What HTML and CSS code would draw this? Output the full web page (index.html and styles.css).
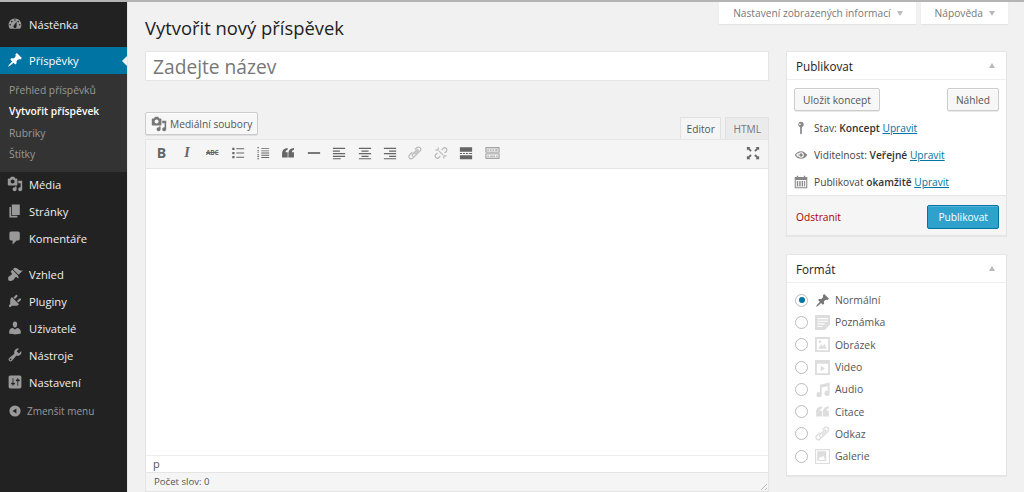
FILE: index.html
```html
<!DOCTYPE html>
<html lang="cs">
<head>
<meta charset="utf-8">
<title>Vytvořit nový příspěvek</title>
<link rel="stylesheet" href="styles.css">
</head>
<body>
<svg class="defs" width="0" height="0" aria-hidden="true">
  <symbol id="i-dash" viewBox="0 0 20 20"><path d="M3.76 16h12.48c1.1-1.37 1.76-3.11 1.76-5 0-4.42-3.58-8-8-8s-8 3.58-8 8c0 1.89.66 3.63 1.76 5zM10 4c.55 0 1 .45 1 1s-.45 1-1 1-1-.45-1-1 .45-1 1-1zM6 6c.55 0 1 .45 1 1s-.45 1-1 1-1-.45-1-1 .45-1 1-1zm8 0c.55 0 1 .45 1 1s-.45 1-1 1-1-.45-1-1 .45-1 1-1zm-5.37 5.55L12 7v6c0 1.1-.9 2-2 2s-2-.9-2-2c0-.57.24-1.08.63-1.45zM4 10c.55 0 1 .45 1 1s-.45 1-1 1-1-.45-1-1 .45-1 1-1zm12 0c.55 0 1 .45 1 1s-.45 1-1 1-1-.45-1-1 .45-1 1-1z" fill-rule="evenodd"/></symbol>
  <symbol id="i-pin" viewBox="0 0 20 20"><path d="M10.44 3.02l1.82-1.82 6.36 6.35-1.83 1.82c-1.05-.68-2.48-.57-3.41.36l-.75.75c-.92.93-1.04 2.35-.35 3.41l-1.83 1.82-2.41-2.41-2.8 2.79c-.42.42-3.38 2.71-3.8 2.29s1.86-3.39 2.28-3.81l2.79-2.79L4.1 9.36l1.83-1.82c1.05.69 2.48.57 3.4-.36l.75-.75c.93-.92 1.05-2.35.36-3.41z"/></symbol>
  <symbol id="i-media" viewBox="0 0 20 20"><path fill-rule="evenodd" d="M13 11V4c0-.55-.45-1-1-1h-1.67L9 1H5L3.67 3H2c-.55 0-1 .45-1 1v7c0 .55.45 1 1 1h10c.55 0 1-.45 1-1zM7 4.500c1.380 0 2.500 1.120 2.500 2.500S8.380 9.500 7 9.500 4.500 8.380 4.500 7 5.620 4.500 7 4.500zM14 6h5v10.500c0 1.380-1.120 2.500-2.500 2.500S14 17.880 14 16.500s1.120-2.500 2.500-2.500c.17 0 .34.02.5.05V9h-3V6zm-4 8.050V13h2v3.500c0 1.380-1.120 2.500-2.500 2.500S7 17.880 7 16.500 8.120 14 9.500 14c.17 0 .34.02.5.05z"/></symbol>
  <symbol id="i-link" viewBox="0 0 20 20"><path fill="none" stroke="currentColor" stroke-width="1.800" d="M10 5l2.500-2.500a3.200 3.200 0 0 1 4.800 4.500l-7.500 7.500a2.100 2.100 0 0 1-3-3l6-6a1 1 0 0 1 1.500 1.500l-5 5M8.500 15.500L6.500 17.500A3.200 3.200 0 0 1 2.500 12.500L6 9"/></symbol>
  <symbol id="i-quote" viewBox="0 0 20 20"><path d="M9.500 3v2.500C7.300 6.200 6.500 7.500 6.500 9H9.500V16.500H1.500V10.500C1.500 6 4.500 3.500 9.500 3zM18.500 3v2.500C16.300 6.200 15.500 7.500 15.500 9H18.500V16.500H10.500V10.500C10.500 6 13.500 3.500 18.500 3z"/></symbol>
</svg>
<div class="app">
  <nav class="sidebar">
    <div class="menu-group">
      <a class="menu-item"><svg class="mi"><use href="#i-dash"/></svg>Nástěnka</a>
    </div>
    <div class="menu-group">
      <a class="menu-item current"><svg class="mi"><use href="#i-pin"/></svg>Příspěvky</a>
      <ul class="submenu">
        <li>Přehled příspěvků</li>
        <li class="on">Vytvořit příspěvek</li>
        <li>Rubriky</li>
        <li>Štítky</li>
      </ul>
      <a class="menu-item"><svg class="mi"><use href="#i-media"/></svg>Média</a>
      <a class="menu-item"><svg class="mi" viewBox="0 0 20 20"><path d="M6 15V2h10v13H6zm-1 1h8v2H3V5h2v11z"/></svg>Stránky</a>
      <a class="menu-item"><svg class="mi" viewBox="0 0 20 20"><path d="M5 2h9c1.100 0 2 .9 2 2v7c0 1.100-.9 2-2 2h-2l-5 5v-5H5c-1.100 0-2-.9-2-2V4c0-1.100.9-2 2-2z"/></svg>Komentáře</a>
    </div>
    <div class="menu-group">
      <a class="menu-item"><svg class="mi" viewBox="0 0 20 20"><path d="M14.480 11.060L7.410 3.990l1.500-1.500c.5-.56 2.300-.47 3.510.32 1.210.8 1.430 1.280 2.910 2.100 1.180.64 2.450 1.260 4.450.85zm-.71.71L6.700 4.700 4.930 6.470c-.39.39-.39 1.020 0 1.410l1.060 1.060c.39.39.39 1.030 0 1.420-.6.6-1.430 1.110-2.210 1.690-.35.26-.7.530-1.010.84C1.430 13.230.78 15.600 2 18.010c2.410 1.220 4.780.57 6.130-.78.31-.31.58-.66.84-1.010.58-.78 1.090-1.610 1.690-2.210.39-.39 1.030-.39 1.420 0l1.060 1.060c.39.39 1.020.39 1.410 0z"/></svg>Vzhled</a>
      <a class="menu-item"><svg class="mi" viewBox="0 0 20 20"><path d="M13.110 4.360L9.870 7.600 8 5.730l3.240-3.240c.35-.34 1.050-.2 1.560.32.52.51.66 1.210.31 1.550zm-8 1.770l.91-1.120 9.010 9.010-1.190.84c-.71.71-2.630 1.160-3.820 1.160H6.140L4.900 17.260c-.59.59-1.540.59-2.120 0-.59-.58-.59-1.530 0-2.120l1.240-1.240v-3.880c0-1.130.4-3.190 1.090-3.890zm7.260 3.970l3.240-3.240c.34-.35 1.040-.21 1.550.31.52.51.66 1.210.31 1.550l-3.240 3.250z"/></svg>Pluginy</a>
      <a class="menu-item"><svg class="mi" viewBox="0 0 20 20"><path d="M10 9.250c-2.270 0-2.730-3.440-2.730-3.440C7 4.020 7.820 2 9.970 2c2.160 0 2.980 2.020 2.710 3.810 0 0-.41 3.440-2.680 3.440zm0 2.570L12.720 10c2.390 0 4.520 2.330 4.520 4.530v2.490s-3.650 1.130-7.240 1.130c-3.650 0-7.240-1.130-7.240-1.130v-2.490c0-2.250 1.940-4.480 4.470-4.480z"/></svg>Uživatelé</a>
      <a class="menu-item"><svg class="mi" viewBox="0 0 20 20"><path fill-rule="evenodd" d="M16.680 9.770c-1.340 1.340-3.300 1.670-4.950.99l-5.410 6.520c-.99.99-2.590.99-3.580 0s-.99-2.590 0-3.570l6.520-5.420c-.68-1.650-.35-3.610.99-4.950 1.280-1.280 3.120-1.620 4.720-1.060l-2.890 2.890 2.820 2.820 2.860-2.870c.53 1.580.18 3.390-1.080 4.650zM3.810 16.210c.4.39 1.040.39 1.430 0 .4-.4.4-1.040 0-1.430-.39-.4-1.030-.4-1.430 0-.39.39-.39 1.030 0 1.430z"/></svg>Nástroje</a>
      <a class="menu-item"><svg class="mi" viewBox="0 0 20 20"><path fill-rule="evenodd" d="M18 16V4c0-1.100-.9-2-2-2H4c-1.100 0-2 .9-2 2v12c0 1.100.9 2 2 2h12c1.100 0 2-.9 2-2zM8 11h1c.55 0 1 .45 1 1s-.45 1-1 1H8v1.500c0 .28-.22.5-.5.5s-.5-.22-.5-.5V13H6c-.55 0-1-.45-1-1s.45-1 1-1h1V5.500c0-.28.22-.5.5-.5s.5.22.5.5V11zm5-2h-1c-.55 0-1-.45-1-1s.45-1 1-1h1V5.500c0-.28.22-.5.5-.5s.5.22.5.5V7h1c.55 0 1 .45 1 1s-.45 1-1 1h-1v5.500c0 .28-.22.5-.5.5s-.5-.22-.5-.5V9z"/></svg>Nastavení</a>
      <a class="collapse"><svg class="ci" viewBox="0 0 20 20"><path fill-rule="evenodd" d="M10 2a8 8 0 1 0 0 16 8 8 0 0 0 0-16zm2 4.500v7L6.500 10z"/></svg>Zmenšit menu</a>
    </div>
  </nav>

  <main class="content">
    <header class="top">
      <h1>Vytvořit nový příspěvek</h1>
      <div class="screen-tabs">
        <button class="screen-tab">Nastavení zobrazených informací<i class="caret"></i></button>
        <button class="screen-tab">Nápověda<i class="caret"></i></button>
      </div>
    </header>
    <div class="columns">
      <section class="primary">
        <div class="title-field">Zadejte název</div>
        <div class="editor-top">
          <button class="media-btn"><svg class="bi"><use href="#i-media"/></svg>Mediální soubory</button>
          <div class="editor-tabs">
            <span class="etab active">Editor</span>
            <span class="etab">HTML</span>
          </div>
        </div>
        <div class="editor">
          <div class="toolbar">
            <span class="tb tb-b">B</span>
            <span class="tb tb-i">I</span>
            <span class="tb tb-s">ABC</span>
            <svg class="tb" viewBox="0 0 16 16"><path d="M1.500 2h2.500v2.500H1.500zM6 2.500h9v1.200H6zM1.500 6.800h2.500v2.500H1.500zM6 7.400h9v1.200H6zM1.500 11.500h2.500v2.500H1.500zM6 12.200h9v1.200H6z"/></svg>
            <svg class="tb" viewBox="0 0 16 16"><path d="M1.500 1.500h2v1h-2zM1.500 4.500h2v1h-2zM1.500 6.500h2v1h-2zM1.500 9.500h2v1h-2zM1.500 11.500h2v1h-2zM1.500 14h2v1h-2zM6 2.200h9v1H6zM6 5h9v1H6zM6 7.500h9v1H6zM6 10h9v1H6zM6 12.700h9v1H6z"/></svg>
            <svg class="tb"><use href="#i-quote"/></svg>
            <svg class="tb" viewBox="0 0 16 16"><path d="M1 7h14v2H1z"/></svg>
            <svg class="tb" viewBox="0 0 16 16"><path d="M1 2h14v1.500H1zM1 5h8v1.500H1zM1 8h14v1.500H1zM1 11h14v1.500H1zM1 14h9v1H1z"/></svg>
            <svg class="tb" viewBox="0 0 16 16"><path d="M1 2h14v1.500H1zM4 5h8v1.500H4zM1 8h14v1.500H1zM4 11h8v1.500H4zM1 14h14v1H1z"/></svg>
            <svg class="tb" viewBox="0 0 16 16"><path d="M1 2h14v1.500H1zM7 5h8v1.500H7zM1 8h14v1.500H1zM7 11h8v1.500H7zM1 14h14v1H1z"/></svg>
            <svg class="tb light"><use href="#i-link"/></svg>
            <svg class="tb light" viewBox="0 0 20 20"><path fill="none" stroke="currentColor" stroke-width="1.800" d="M11 6l2.500-3a3.200 3.200 0 0 1 4.300 4.500L15 10M9 14l-2.500 3a3.200 3.200 0 0 1-4.300-4.500L5 10M7 7l6 6M6 2v4M2 6h4M14 18v-4M18 14h-4"/></svg>
            <svg class="tb" viewBox="0 0 16 16"><path d="M1 1.500h14v5H1zM1 8h2.500v1H1zM4.500 8H7v1H4.500zM8 8h2.500v1H8zM11.500 8H15v1h-3.500zM1 10.500h14v4.500H1z"/></svg>
            <svg class="tb kitchen" viewBox="0 0 16 16"><path fill-rule="evenodd" d="M0 1.500h16v6H0zM1 2.500v4h14v-4zM2 4h2v1H2zM5 4h2v1H5zM8 4h2v1H8zM11 4h3v1h-3zM0 8.500h16v6H0zM1 9.500v4h14v-4zM2 11h2v1H2zM5 11h6v1H5zM12 11h2v1h-2z"/></svg>
            <svg class="tb fs" viewBox="0 0 16 16"><path d="M1 1h4L3.800 2.200 6.500 5 5 6.500 2.200 3.800 1 5zM15 1v4l-1.200-1.200L11 6.500 9.500 5l2.700-2.800L11 1zM1 15v-4l1.200 1.200L5 9.500 6.500 11l-2.700 2.800L5 15zM15 15h-4l1.200-1.200L9.500 11 11 9.500l2.800 2.700L15 11z"/></svg>
          </div>
          <div class="editor-body"></div>
          <div class="path">p</div>
          <div class="status">Počet slov: 0<i class="grip"></i></div>
        </div>
      </section>

      <aside class="secondary">
        <div class="box">
          <h2 class="box-head">Publikovat<i class="up"></i></h2>
          <div class="pub-actions">
            <button class="btn">Uložit koncept</button>
            <button class="btn">Náhled</button>
          </div>
          <div class="pub-row"><svg class="pi" viewBox="0 0 20 20"><path fill-rule="evenodd" d="M10 1a4 4 0 0 1 1.200 7.800V17c0 1-.5 2-1.200 2s-1.200-1-1.200-2V8.800A4 4 0 0 1 10 1zM8.500 3.500a1.200 1.200 0 1 0 0 2.400 1.200 1.200 0 0 0 0-2.400z"/></svg><span>Stav: <b>Koncept</b> <a>Upravit</a></span></div>
          <div class="pub-row"><svg class="pi" viewBox="0 0 20 20"><path fill-rule="evenodd" d="M10 4.500c4 0 7.200 2.600 9 5.500-1.800 2.900-5 5.500-9 5.500S2.800 12.900 1 10c1.800-2.900 5-5.500 9-5.500zM10 6a4 4 0 1 0 0 8 4 4 0 0 0 0-8zM3 10c1 1.300 2.200 2.500 3.800 3.300A5 5 0 0 1 6.800 6.700C5.200 7.500 4 8.700 3 10zm7-2.500a2.500 2.500 0 1 1 0 5 2.500 2.500 0 0 1 0-5z"/></svg><span>Viditelnost: <b>Veřejné</b> <a>Upravit</a></span></div>
          <div class="pub-row"><svg class="pi" viewBox="0 0 20 20"><path fill-rule="evenodd" d="M4 1h2v2h8V1h2v2h3v16H1V3h3zM2.500 7v10.500h15V7zM4 8.500h2v8H4zM7.500 8.500h2v8h-2zM11 8.500h2v8h-2zM14.500 8.500h1.500v8h-1.500z"/></svg><span>Publikovat <b>okamžitě</b> <a>Upravit</a></span></div>
          <div class="pub-foot">
            <a class="del">Odstranit</a>
            <button class="primary-btn">Publikovat</button>
          </div>
        </div>

        <div class="box format">
          <h2 class="box-head">Formát<i class="up"></i></h2>
          <ul class="formats">
            <li><i class="radio on"></i><svg class="fi dark"><use href="#i-pin"/></svg>Normální</li>
            <li><i class="radio"></i><svg class="fi" viewBox="0 0 20 20"><path fill-rule="evenodd" d="M0 0h20v13l-7 7H0zM3 4v1.500h14V4zM3 7.500V9h14V7.500zM3 11v1.500h10V11zM3 14.500V16h7v-1.500z"/></svg>Poznámka</li>
            <li><i class="radio"></i><svg class="fi" viewBox="0 0 20 20"><path fill-rule="evenodd" d="M0 0h20v20H0zM2.500 2.500v15h15v-15zM4.500 15.500l3.500-6 2.500 3 2-4 3 7zM6.500 4.500a1.800 1.800 0 1 1 0 3.600 1.800 1.800 0 0 1 0-3.600z"/></svg>Obrázek</li>
            <li><i class="radio"></i><svg class="fi" viewBox="0 0 20 20"><path fill-rule="evenodd" d="M0 0h20v20H0zM2.500 5v12.500h15V5zM7.500 7.500l6 3.800-6 3.800z"/></svg>Video</li>
            <li><i class="radio"></i><svg class="fi" viewBox="0 0 20 20"><path d="M6.500 3.500l13-3V15a3.500 3.500 0 1 1-2.500-3.300V5.500L9 7.300V17a3.500 3.500 0 1 1-2.500-3.300z"/></svg>Audio</li>
            <li><i class="radio"></i><svg class="fi"><use href="#i-quote"/></svg>Citace</li>
            <li><i class="radio"></i><svg class="fi"><use href="#i-link"/></svg>Odkaz</li>
            <li><i class="radio"></i><svg class="fi" viewBox="0 0 20 20"><path fill-rule="evenodd" d="M0 0h20v20H0zM1.500 1.500V18.500h17V1.500zM3 3h12v13H3zM4.500 14.500h9l-2.500-6-2.500 3-1.500-2z"/></svg>Galerie</li>
          </ul>
        </div>
      </aside>
    </div>
  </main>
</div>
</body>
</html>
```

FILE: styles.css
```css
* { box-sizing: border-box; }
html, body { margin: 0; height: 100%; }
body {
  font-family: "Open Sans", "Liberation Sans", sans-serif;
  font-size: 10.200px;
  color: #444;
  background: #f1f1f1;
  overflow: hidden;
}
.defs { position: absolute; }
.app {
  display: flex;
  height: 492px;
  border-top: 2px solid #b4b4b4;
}
button { font-family: inherit; cursor: default; }

/* sidebar */
.sidebar {
  flex: 0 0 128px;
  background: #222;
  padding-top: 9px;
  border-right: 1px solid #e4e4e4;
}
.menu-group { margin-bottom: 9px; }
.menu-item {
  display: flex;
  align-items: center;
  height: 27px;
  padding: 0 0 1px 7px;
  color: #eee;
  font-size: 11.200px;
  position: relative;
}
.menu-group + .menu-group .menu-item { padding-bottom: 3px; }
.menu-group .menu-item.current { padding-bottom: 1px; }
.mi {
  width: 16px;
  height: 16px;
  margin-right: 6px;
  fill: #999;
  flex: none;
}
.menu-item.current { background: #0074a2; color: #fff; }
.menu-item.current .mi { fill: #fff; }
.menu-item.current::after {
  content: "";
  position: absolute;
  right: 0;
  top: 9px;
  border: 5px solid transparent;
  border-right-color: #f1f1f1;
  border-left-width: 0;
}
.submenu {
  list-style: none;
  margin: 0;
  padding: 6px 0 0 9px;
  background: #333;
  color: #999;
  height: 98px;
}
.submenu li { height: 21.300px; line-height: 21.300px; font-size: 10.300px; }
.submenu .on { color: #fff; font-weight: 600; }
.collapse {
  display: flex;
  align-items: center;
  height: 27px;
  padding-left: 8px;
  color: #999;
  font-size: 10px;
}
.ci { width: 14px; height: 14px; margin-right: 5px; fill: #999; }

/* content */
.content { flex: 1; padding: 0 16px 0 17px; min-width: 0; }
.top { display: flex; justify-content: space-between; align-items: flex-start; height: 49px; }
h1 {
  margin: 14px 0 0;
  font-size: 18.400px;
  font-weight: 400;
  line-height: 24px;
  color: #222;
}
.screen-tabs { display: flex; gap: 5px; }
.screen-tab {
  height: 22px;
  background: #fff;
  border: 0;
  box-shadow: 0 1px 1px rgba(0,0,0,.05);
  padding: 0 13px 0 14px;
  font-size: 10.200px;
  color: #777;
  display: flex;
  align-items: center;
}
.caret {
  margin-left: 6px;
  border: 3.500px solid transparent;
  border-top: 5px solid #bbb;
  border-bottom: 0;
}
.columns { display: grid; grid-template-columns: 624px 221px; gap: 17px; align-items: start; }

/* editor */
.title-field {
  height: 30px;
  background: #fff;
  border: 1px solid #e5e5e5;
  line-height: 29px;
  padding-left: 7px;
  font-size: 19.200px;
  color: #777;
}
.editor-top {
  display: flex;
  justify-content: space-between;
  align-items: flex-end;
  height: 58px;
}
.media-btn {
  display: flex;
  align-items: center;
  height: 23px;
  margin-bottom: 4px;
  padding: 0 5px;
  background: #f7f7f7;
  border: 1px solid #ccc;
  border-radius: 2px;
  box-shadow: 0 1px 0 #fff inset, 0 1px 0 rgba(0,0,0,.08);
  font-size: 10.200px;
  color: #555;
}
.bi { width: 16px; height: 16px; fill: #777; margin-right: 3px; }
.editor-tabs { display: flex; gap: 4px; }
.etab {
  height: 22px;
  line-height: 22px;
  padding: 0 7px;
  border: 1px solid #e2e2e2;
  border-bottom: 0;
  background: #ebebeb;
  color: #777;
  font-size: 10.200px;
}
.etab.active { background: #f5f5f5; color: #555; margin-bottom: -1px; padding: 0 5.500px; }
.editor { border: 1px solid #e5e5e5; background: #fff; }
.toolbar {
  display: flex;
  align-items: center;
  height: 29px;
  padding: 0 0 2px 8.500px;
  gap: 11.400px;
  background: #f5f5f5;
  border-bottom: 1px solid #e5e5e5;
  color: #555;
}
.tb { width: 14px; height: 14px; flex: none; fill: #666; color: #666; text-align: center; line-height: 14px; }
.tb-b { font-weight: 700; font-size: 14px; }
.tb-i { font-weight: 700; font-style: italic; font-size: 14px; font-family: "Liberation Serif", serif; }
.tb-s { font-size: 6.500px; font-weight: 700; text-decoration: line-through; letter-spacing: -.2px; }
.tb.light { fill: #bbb; color: #bbb; }
.tb.kitchen { fill: #888; width: 15px; }
.tb.fs { margin-left: auto; margin-right: 8px; }
.editor-body { height: 286px; }
.path {
  height: 18px;
  line-height: 15px;
  padding-left: 7px;
  border-top: 1px solid #eee;
  border-bottom: 1px solid #e5e5e5;
  font-size: 11px;
  color: #555;
}
.status {
  height: 18px;
  line-height: 18px;
  padding-left: 8px;
  background: #f5f5f5;
  font-size: 9.600px;
  color: #555;
  position: relative;
}
.grip {
  position: absolute;
  right: 1px;
  bottom: 1px;
  width: 9px;
  height: 9px;
  background: repeating-linear-gradient(135deg, transparent 0 2px, #bbb 2px 3px);
  clip-path: polygon(100% 0, 100% 100%, 0 100%);
}

/* boxes */
.box {
  background: #fff;
  border: 1px solid #e5e5e5;
  box-shadow: 0 1px 1px rgba(0,0,0,.04);
}
.box-head {
  display: flex;
  align-items: center;
  justify-content: space-between;
  height: 28px;
  margin: 0;
  padding: 0 11px 0 9px;
  font-size: 11.700px;
  font-weight: 400;
  color: #222;
  border-bottom: 1px solid #eee;
}
.up {
  border: 3.500px solid transparent;
  border-bottom: 5px solid #bbb;
  border-top: 0;
}
.pub-actions { display: flex; justify-content: space-between; padding: 8px 7px 0; }
.btn {
  height: 23px;
  padding: 0 8px;
  background: #f7f7f7;
  border: 1px solid #ccc;
  border-radius: 2px;
  box-shadow: 0 1px 0 #fff inset, 0 1px 0 rgba(0,0,0,.08);
  font-size: 10.200px;
  color: #555;
}
.pub-row {
  display: flex;
  align-items: center;
  height: 27px;
  padding-left: 7px;
}
.pub-actions + .pub-row { margin-top: 3px; }
.pub-row b { font-weight: 600; color: #333; }
.pub-row a { color: #0074a2; text-decoration: underline; }
.pi { width: 14px; height: 14px; margin-right: 6px; fill: #888; flex: none; }
.pub-foot {
  display: flex;
  justify-content: space-between;
  align-items: center;
  height: 40px;
  padding: 2px 7px 0 9px;
  background: #f5f5f5;
  border-top: 1px solid #e5e5e5;
}
.del { color: #a00; }
.primary-btn {
  height: 24px;
  padding: 0 10px;
  background: #2ea2cc;
  border: 1px solid #0074a2;
  border-radius: 2px;
  box-shadow: 0 1px 0 rgba(120,200,230,.5) inset;
  color: #fff;
  font-size: 10.200px;
}
.format { margin-top: 18px; height: 222px; }
.formats { list-style: none; margin: 0; padding: 6px 0 0 8px; }
.formats li {
  display: flex;
  align-items: center;
  height: 22.300px;
  font-size: 10.400px;
  color: #555;
}
.radio {
  width: 13px;
  height: 13px;
  border: 1px solid #bbb;
  border-radius: 50%;
  margin-right: 7px;
  flex: none;
  background: #fff;
  position: relative;
}
.radio.on::after {
  content: "";
  position: absolute;
  inset: 2.500px;
  border-radius: 50%;
  background: #0074a2;
}
.fi { width: 15px; height: 15px; margin-right: 5px; fill: #ddd; color: #ddd; flex: none; }
.fi.dark { fill: #777; color: #777; }
```
